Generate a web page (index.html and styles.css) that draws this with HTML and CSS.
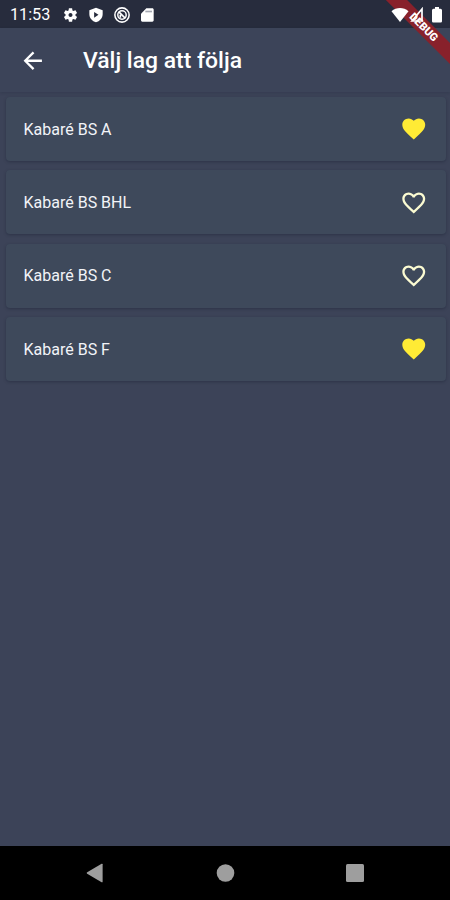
FILE: index.html
```html
<!DOCTYPE html>
<html lang="sv">
<head>
<meta charset="utf-8">
<title>Välj lag att följa</title>
<link rel="stylesheet" href="styles.css">
</head>
<body>
<div class="screen">
  <header class="status">
    <span class="clock">11:53</span>
    <div class="notices">
      <svg class="gear" viewBox="0 0 24 24"><path d="M19.43 12.98c.04-.32.07-.64.07-.98s-.03-.66-.07-.98l2.11-1.65c.19-.15.24-.42.12-.64l-2-3.46c-.12-.22-.39-.3-.61-.22l-2.49 1c-.52-.4-1.08-.73-1.69-.98l-.38-2.65C14.46 2.18 14.25 2 14 2h-4c-.25 0-.46.18-.49.42l-.38 2.65c-.61.25-1.17.59-1.69.98l-2.49-1c-.23-.09-.49 0-.61.22l-2 3.46c-.13.22-.07.49.12.64l2.11 1.65c-.04.32-.07.65-.07.98s.03.66.07.98l-2.11 1.65c-.19.15-.24.42-.12.64l2 3.460c.12.22.39.3.61.22l2.49-1c.52.4 1.08.73 1.69.98l.38 2.65c.03.24.24.42.49.42h4c.25 0 .46-.18.49-.42l.38-2.65c.61-.25 1.17-.59 1.69-.98l2.49 1c.23.09.49 0 .61-.22l2-3.46c.12-.22.07-.49-.12-.64l-2.11-1.65zM12 15c-1.660 0-3-1.340-3-3s1.340-3 3-3 3 1.340 3 3-1.340 3-3 3z"/></svg>
      <svg viewBox="0 0 24 24"><path fill-rule="evenodd" d="M12 1 2 5v6c0 5.550 4.500 10.740 10 12 5.500-1.260 10-6.450 10-12V5zM9.200 7.500v8.500l6.500-4.200z"/></svg>
      <svg viewBox="0 0 24 24"><g fill="none" stroke="#fff"><circle cx="12" cy="12" r="10.700" stroke-width="2.300"/><circle cx="12" cy="12" r="6.300" stroke-width="2.200"/><path stroke-width="2.500" d="m7 7 10 10M9.500 16v-4.500"/></g></svg>
      <svg viewBox="0 0 24 24"><path d="M20 2h-9L3 10v10c0 1.100.9 2 2 2h15c1.100 0 2-.9 2-2V4c0-1.100-.9-2-2-2z"/><path class="slots" d="M9.500 5.500h10v2.500h-10z"/></svg>
    </div>
    <div class="signals">
      <svg class="wifi" viewBox="0 0 18 16"><path d="M9 15 .5 4.300C5.300-.1 12.700-.1 17.500 4.300z"/></svg>
      <svg class="cell" viewBox="0 0 14 16"><path fill="none" stroke="#fff" stroke-width="1.700" d="M12 2v12H2z"/></svg>
      <svg class="battery" viewBox="0 0 10 16"><path d="M3 0h4v1.800h1.500Q10 1.800 10 3.300v11Q10 15.500 8.700 15.500H1.300Q0 15.500 0 14.300v-11Q0 1.800 1.500 1.800H3z"/></svg>
    </div>
  </header>
  <div class="appbar">
    <svg class="back" viewBox="0 0 24 24"><path d="M20 11H7.830l5.590-5.590L12 4l-8 8 8 8 1.410-1.410L7.830 13H20v-2z"/></svg>
    <h1>Välj lag att följa</h1>
  </div>
  <main class="teams">
    <div class="team"><span>Kabaré BS A</span><svg class="heart on" viewBox="0 0 24 24"><path d="m12 21.350-1.450-1.320C5.400 15.360 2 12.280 2 8.500 2 5.420 4.420 3 7.500 3c1.740 0 3.410.81 4.500 2.090C13.090 3.810 14.760 3 16.500 3 19.580 3 22 5.420 22 8.500c0 3.780-3.400 6.860-8.550 11.540z"/></svg></div>
    <div class="team"><span>Kabaré BS BHL</span><svg class="heart" viewBox="0 0 24 24"><path d="M16.500 3c-1.740 0-3.410.81-4.500 2.090C10.910 3.810 9.240 3 7.500 3 4.420 3 2 5.420 2 8.500c0 3.780 3.400 6.860 8.550 11.540L12 21.350l1.450-1.320C18.600 15.360 22 12.280 22 8.500 22 5.420 19.580 3 16.500 3zm-4.400 15.550-.1.100-.1-.1C7.140 14.240 4 11.390 4 8.500 4 6.500 5.500 5 7.500 5c1.540 0 3.040.99 3.570 2.360h1.870C13.460 5.990 14.960 5 16.500 5c2 0 3.500 1.500 3.500 3.500 0 2.890-3.140 5.740-7.900 10.050z"/></svg></div>
    <div class="team"><span>Kabaré BS C</span><svg class="heart" viewBox="0 0 24 24"><path d="M16.500 3c-1.740 0-3.410.81-4.500 2.090C10.910 3.810 9.240 3 7.500 3 4.420 3 2 5.420 2 8.500c0 3.780 3.400 6.860 8.550 11.540L12 21.350l1.450-1.320C18.600 15.360 22 12.280 22 8.500 22 5.420 19.580 3 16.500 3zm-4.400 15.550-.1.100-.1-.1C7.140 14.240 4 11.390 4 8.500 4 6.500 5.500 5 7.500 5c1.540 0 3.040.99 3.570 2.360h1.870C13.460 5.990 14.960 5 16.500 5c2 0 3.500 1.500 3.500 3.500 0 2.890-3.140 5.740-7.900 10.050z"/></svg></div>
    <div class="team"><span>Kabaré BS F</span><svg class="heart on" viewBox="0 0 24 24"><path d="m12 21.350-1.450-1.320C5.400 15.360 2 12.280 2 8.500 2 5.420 4.420 3 7.500 3c1.740 0 3.410.81 4.500 2.090C13.090 3.810 14.760 3 16.500 3 19.580 3 22 5.420 22 8.500c0 3.780-3.400 6.860-8.550 11.540z"/></svg></div>
  </main>
  <nav class="navbar">
    <svg viewBox="0 0 20 20"><path d="M2.200 9.200 16.600.8q1-.5 1 .5v17.400q0 1-1 .5L2.200 10.800q-1.200-.8 0-1.600z"/></svg>
    <svg viewBox="0 0 20 20"><circle cx="10.500" cy="10" r="8.800"/></svg>
    <svg viewBox="0 0 20 20"><rect x="1" y="1" width="18" height="18" rx="1.500"/></svg>
  </nav>
  <div class="banner">DEBUG</div>
</div>
</body>
</html>
```

FILE: styles.css
```css
* { box-sizing: border-box; }
body { margin: 0; font-family: Roboto, sans-serif; color: #fff; }
svg { display: block; flex: none; fill: #fff; }
.screen {
  position: relative;
  display: flex;
  flex-direction: column;
  width: 450px;
  height: 900px;
  overflow: hidden;
  background: #3c4358;
}
.status {
  display: flex;
  align-items: center;
  height: 28px;
  padding: 1px 8px 0 10px;
  background: #272c3d;
}
.status > * { position: relative; z-index: 2; }
.clock { width: 52px; font-size: 16.200px; line-height: 20px; }
.notices { display: flex; gap: 9.300px; }
.notices svg { width: 16px; height: 16px; }
.notices .gear { width: 17px; }
.slots { fill: #a5a8b2; }
.signals { display: flex; align-items: center; margin-left: auto; }
.wifi { width: 18px; height: 16px; }
.cell { width: 14px; height: 16px; margin: 0 8px 0 1px; }
.battery { width: 10px; height: 16px; }
.appbar {
  display: flex;
  align-items: center;
  height: 64px;
  padding: 1px 0 0 19px;
  background: #3c4459;
  box-shadow: 0 1px 3px rgba(24, 29, 48, .2);
}
.back { width: 27.500px; height: 27.500px; }
h1 { margin: 1px 0 0 36.500px; font-size: 22.900px; line-height: 28px; font-weight: 500; }
.teams {
  display: flex;
  flex: 1;
  flex-direction: column;
  gap: 9.300px;
  padding: 5px 4.500px 0 5.500px;
}
.team {
  display: flex;
  align-items: center;
  justify-content: space-between;
  height: 64.100px;
  padding: 0 18px;
  border-radius: 4px;
  background: #3e495b;
  box-shadow: 0 1px 3px rgba(24, 29, 48, .4);
  font-size: 16px;
  line-height: 19px;
  color: #f2f4f8;
}
.heart { width: 27.500px; height: 27.500px; fill: #fbfbd2; }
.heart.on { fill: #ffeb35; }
.navbar {
  display: flex;
  align-items: center;
  justify-content: space-between;
  height: 54px;
  padding: 0 85px;
  background: #000;
}
.navbar svg { width: 20px; height: 20px; fill: #9e9e9e; }
.banner {
  position: absolute;
  left: 363px;
  top: 19px;
  width: 120px;
  height: 15px;
  padding-left: 2px;
  transform: rotate(45deg);
  background: #88212b;
  font-size: 11px;
  line-height: 15px;
  font-weight: 900;
  text-align: center;
}
```
